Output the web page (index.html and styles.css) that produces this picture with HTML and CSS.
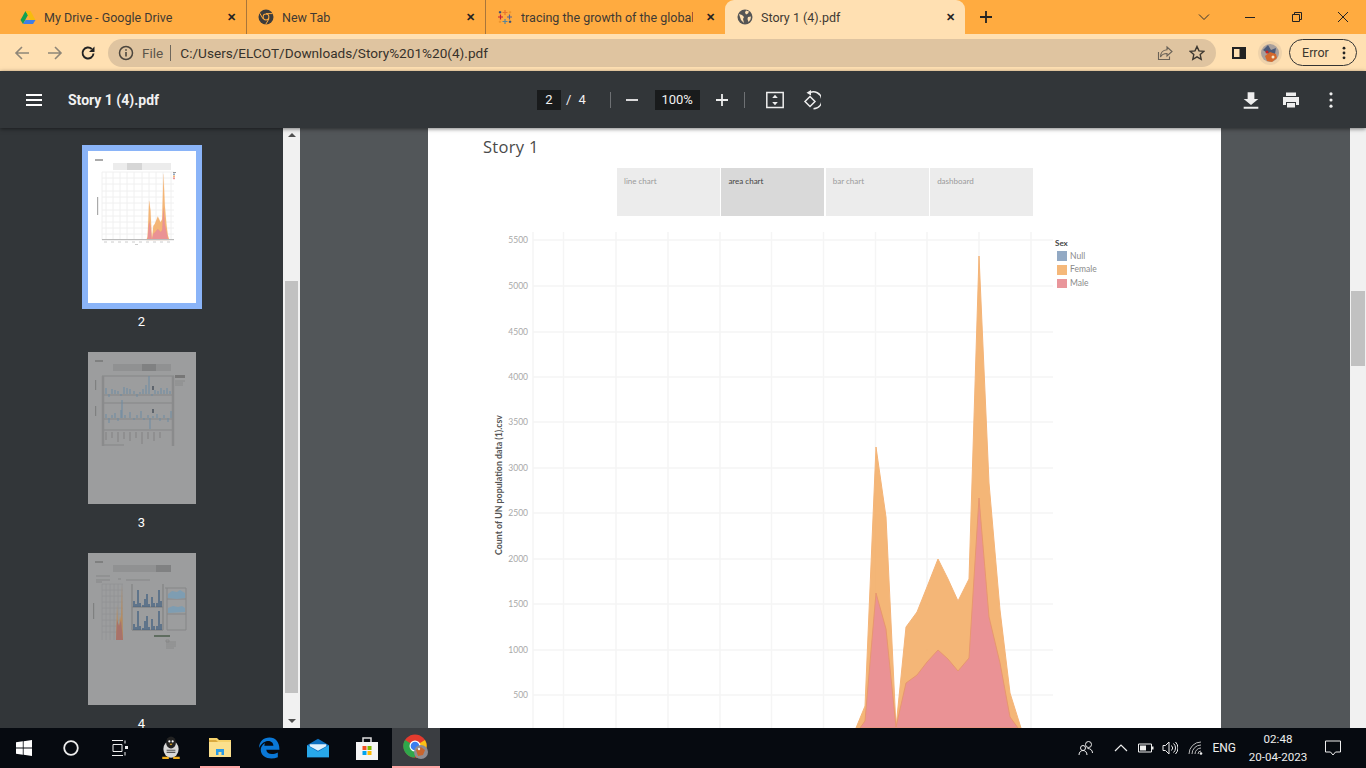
FILE: index.html
```html
<!DOCTYPE html>
<html lang="en">
<head>
    <meta charset="UTF-8">
    <title>Story 1 (4).pdf</title>
    <link rel="stylesheet" href="styles.css">
</head>
<body>
<div class="tabstrip">
    <div class="tab">
        <svg class="favicon" viewBox="0 0 16 16"><path d="M5.500 2 .5 11l2.500 4 5-9z" fill="#12a150"/><path d="M5.500 2h5l5 9h-5z" fill="#f7bb0e"/><path d="M3 15h10l2.500-4H5.500z" fill="#3f7ee8"/></svg>
        <span class="tab-title">My Drive - Google Drive</span>
        <span class="tab-close">✕</span>
    </div>
    <div class="tab">
        <svg class="favicon" viewBox="0 0 16 16"><circle cx="8" cy="8" r="7.500" fill="#3c3c3c"/><circle cx="8" cy="8" r="3.400" fill="#ffab40"/><circle cx="8" cy="8" r="2.400" fill="#3c3c3c"/><path d="M8 4.600h6.600M5 9.800 1.800 4.200M11 9.800l-3.300 5.600" stroke="#ffab40" stroke-width="1"/></svg>
        <span class="tab-title">New Tab</span>
        <span class="tab-close">✕</span>
    </div>
    <div class="tab">
        <svg class="favicon" viewBox="0 0 16 16"><path d="M8 1v5M5.500 3.500h5" stroke="#e8762d" stroke-width="1.200"/><path d="M8 10v5M5.500 12.500h5" stroke="#59879b" stroke-width="1.200"/><path d="M3.500 5.500v5M1 8h5" stroke="#c72037" stroke-width="1.200"/><path d="M12.500 5.500v5M10 8h5" stroke="#5b6591" stroke-width="1.200"/><path d="M3 2v2.500M1.800 3.200h2.500M13 11.500V14M11.800 12.800h2.500" stroke="#1f457e" stroke-width="1"/><path d="M13 2v2.500M11.800 3.200h2.500M3 11.500V14M1.800 12.800h2.500" stroke="#eb912b" stroke-width="1"/></svg>
        <span class="tab-title">tracing the growth of the global</span>
        <span class="tab-close">✕</span>
    </div>
    <div class="tab tab-active">
        <svg class="favicon" viewBox="0 0 16 16"><circle cx="8" cy="8" r="7.500" fill="#555"/><path d="M2 5l3 1 2 2-1 2 1 4-3-3-1-3zM9 1.500l3 1-1 2-2 1-1-2zM11 8l3-.5-.5 3-2 2.500-1-3z" fill="#ffe0b2"/></svg>
        <span class="tab-title">Story 1 (4).pdf</span>
        <span class="tab-close">✕</span>
    </div>
    <svg class="new-tab" viewBox="0 0 14 14"><path d="M7 1v12M1 7h12" stroke="#222" stroke-width="1.800"/></svg>
    <div class="window-btns">
        <svg class="win-icon win-chevron" viewBox="0 0 12 12"><path d="M1 3.500 6 8.500l5-5" fill="none" stroke="#333"/></svg>
        <svg class="win-icon win-min" viewBox="0 0 12 12"><path d="M1 6.500h10" stroke="#222"/></svg>
        <svg class="win-icon win-max" viewBox="0 0 12 12"><path d="M1.500 3.500h7v7h-7zM3.500 3.500v-2h7v7h-2" fill="none" stroke="#222"/></svg>
        <svg class="win-icon win-close" viewBox="0 0 12 12"><path d="M1 1l10 10M11 1 1 11" stroke="#222"/></svg>
    </div>
</div>

<div class="browser-bar">
    <svg class="nav-icon" viewBox="0 0 16 16"><path d="M15 8H2M8 2 2 8l6 6" fill="none" stroke="#8f8678" stroke-width="1.600"/></svg>
    <svg class="nav-icon" viewBox="0 0 16 16"><path d="M1 8h13M8 2l6 6-6 6" fill="none" stroke="#8f8678" stroke-width="1.600"/></svg>
    <svg class="nav-icon" viewBox="0 0 16 16"><path d="M13.500 8.500A5.500 5.500 0 1 1 11.800 4" fill="none" stroke="#222" stroke-width="1.900"/><path d="M14.500 1.500v5.500H9z" fill="#222"/></svg>
    <div class="omnibox">
        <svg class="info-icon" viewBox="0 0 16 16"><circle cx="8" cy="8" r="6.500" fill="none" stroke="#4c463e" stroke-width="1.500"/><path d="M8 7v4.500M8 4.200v1.500" stroke="#4c463e" stroke-width="1.600"/></svg>
        <span class="omni-file">File</span>
        <span class="omni-sep"></span>
        <span class="omni-url">C:/Users/ELCOT/Downloads/Story%201%20(4).pdf</span>
        <svg class="omni-share" viewBox="0 0 16 16"><path d="M10 2l5 4.500L10 11V8.500C6.500 8.500 4.500 10 3.500 12 3.500 8 6 5 10 4.800zM1.500 7v7.500h11V11.500" fill="none" stroke="#6a6257" stroke-width="1.100"/></svg>
        <svg class="omni-star" viewBox="0 0 16 16"><path d="M8 1.500l2 4.400 4.700.5-3.500 3.200 1 4.700L8 11.900l-4.200 2.400 1-4.700L1.300 6.400 6 5.900z" fill="none" stroke="#3c3730" stroke-width="1.400"/></svg>
    </div>
    <svg class="panel-icon" viewBox="0 0 14 14"><path d="M0 1h14v12H0z" fill="#222"/><path d="M2 3h5.500v8H2z" fill="#ffe0b2"/></svg>
    <svg class="avatar" viewBox="0 0 24 24"><circle cx="12" cy="12" r="12" fill="#efd2aa"/><circle cx="12" cy="12" r="9" fill="#a89f9c"/><path d="M5 9l5-5 3 5 5-2-1 6-5 1z" fill="#4c5a78"/><path d="M7 15l5-4 6 2 1 4-5 4-5-1z" fill="#d4682c"/><circle cx="9" cy="11" r="1.500" fill="#c22"/><circle cx="15" cy="16" r="1.500" fill="#f5e6c8"/></svg>
    <div class="error-pill">
        <span>Error</span>
        <svg class="pill-dots" viewBox="0 0 4 16"><circle cx="2" cy="2.500" r="1.600"/><circle cx="2" cy="8" r="1.600"/><circle cx="2" cy="13.500" r="1.600"/></svg>
    </div>
</div>

<div class="pdf-bar">
    <svg class="hamburger" viewBox="0 0 18 14"><path d="M1 2h16M1 7h16M1 12h16" stroke="#fff" stroke-width="2"/></svg>
    <span class="pdf-title">Story 1 (4).pdf</span>
    <div class="page-box">2</div>
    <span class="page-slash">/</span>
    <span class="page-total">4</span>
    <span class="pdf-sep sep-one"></span>
    <svg class="pdf-icon icon-minus" viewBox="0 0 14 14"><path d="M1 7h12" stroke="#eee" stroke-width="1.800"/></svg>
    <div class="zoom-box">100%</div>
    <svg class="pdf-icon icon-plus" viewBox="0 0 14 14"><path d="M1 7h12M7 1v12" stroke="#eee" stroke-width="1.800"/></svg>
    <span class="pdf-sep sep-two"></span>
    <svg class="pdf-tool icon-fit" viewBox="0 0 18 18"><path d="M.8 1.500h16.400v15H.8z" fill="none" stroke="#eee" stroke-width="1.500"/><path d="M9 3.800l2.800 3.200H6.200zM9 14.200l2.800-3.200H6.200z" fill="#eee"/></svg>
    <svg class="pdf-tool icon-rotate" viewBox="0 0 20 20"><path d="M9 6.500l-5 5 5 5 5-5z" fill="none" stroke="#eee" stroke-width="1.500"/><path d="M9 2.500a8.500 8.500 0 1 1 3.500 16.300" fill="none" stroke="#eee" stroke-width="1.500"/><path d="M10 0v5.500L5.500 2.700z" fill="#eee"/></svg>
    <span class="pdf-right">
        <svg class="pdf-tool" viewBox="0 0 16 16"><path d="M5 1h6v6h3.500L8 12.500 1.500 7H5zM1.500 14h13v1.800h-13z" fill="#eee"/></svg>
        <svg class="pdf-tool" viewBox="0 0 18 18"><path d="M4 1.500h10V5H4zM1 6h16v8h-3v-3H4v3H1zM5 12h8v4.500H5z" fill="#eee"/></svg>
        <svg class="pdf-tool" viewBox="0 0 16 16"><circle cx="8" cy="2.500" r="1.400" fill="#eee"/><circle cx="8" cy="8" r="1.400" fill="#eee"/><circle cx="8" cy="13.500" r="1.400" fill="#eee"/></svg>
    </span>
</div>

<div class="viewer">
    <div class="sidebar">
        <div class="thumbs">
            <div class="thumb thumb-on">
                <svg class="thumb-img" viewBox="0 0 108 152">
                    <rect width="108" height="152" fill="#fff"/>
                    <rect x="7" y="8" width="8" height="2" fill="#aaa"/>
                    <rect x="25" y="12" width="58" height="7" fill="#ececec"/>
                    <rect x="39" y="12" width="15" height="7" fill="#d6d6d6"/>
                    <path d="M14 21v68M18 21v68M25 21v68M32 21v68M39 21v68M46 21v68M54 21v68M61 21v68M68 21v68M75 21v68M83 21v68M14 21h72M14 27h72M14 33h72M14 40h72M14 46h72M14 52h72M14 59h72M14 65h72M14 71h72M14 77h72M14 83h72" stroke="#f0f0f0" stroke-width="1" fill="none"/>
                    <g transform="matrix(.1394 0 0 .1394 -61 -12.500)">
                        <use href="#female-shape"/>
                        <use href="#male-shape"/>
                    </g>
                    <rect x="14" y="88" width="72" height="1.200" fill="#bbb"/>
                    <path d="M16 91h3M23 91h3M30 91h3M37 91h3M44 91h3M51 91h3M58 91h3M65 91h3M72 91h3M79 91h3" stroke="#ccc" fill="none"/>
                    <rect x="47" y="93" width="3" height="1" fill="#ccc"/>
                    <rect x="9" y="46" width="1.200" height="18" fill="#aaa"/>
                    <rect x="85" y="21" width="3" height="1" fill="#999"/>
                    <rect x="85" y="22.500" width="2" height="1.700" fill="#92a9c4"/>
                    <rect x="85" y="24.500" width="2" height="1.700" fill="#f5b87a"/>
                    <rect x="85" y="26.500" width="2" height="1.700" fill="#e9969b"/>
                </svg>
            </div>
            <div class="thumb-label">2</div>
            <div class="thumb">
                <svg class="thumb-img" viewBox="0 0 108 152">
                    <rect width="108" height="152" fill="#9c9d9e"/>
                    <rect x="7" y="8" width="8" height="2" fill="#7f8080"/>
                    <rect x="25" y="12" width="58" height="7" fill="#909192"/>
                    <rect x="54" y="12" width="14" height="7" fill="#808182"/>
                    <path d="M14 24h72M14 43h72M14 51h72M14 67h72M14 78h72M14 93h22" stroke="#858687" stroke-width="1" fill="none"/>
                    <path d="M15 24v70M85 24v70" stroke="#8a8b8c" stroke-width="2.500" fill="none"/>
                    <path d="M18 42v-6M21 42v3M24 42v-5M27 42v-4M30 42v-3M33 42v2M36 42v-7M39 42v-6M42 42v-5M46 42v-3M49 42v3M52 42v-2M55 42v-5M58 42v-9M61 42v-18M64 42v2M67 42v-4M70 42v-3M73 42v-6M76 42v-4M79 42v-6M82 42v-3" stroke="#6d8ba3" stroke-width="1" fill="none"/>
                    <path d="M18 66v-4M21 66v5M24 66v-3M27 66v-5M30 66v3M33 66v-8M34 66v-18M37 66v-3M42 66v-6M46 66v2M49 66v-3M53 66v-7M56 66v2M60 66v-3M62 66v11M65 66v-2M69 66v-4M72 66v3M76 66v-3M80 66v4M83 66v-7" stroke="#6d8ba3" stroke-width="1" fill="none"/>
                    <path d="M65 34v4M65 57v4" stroke="#36404d" stroke-width="1.200" fill="none"/>
                    <path d="M18 80v8M24 80v6M30 80v10M36 80v7M42 80v9M48 80v6M54 80v12M60 80v7M66 80v9M72 80v6" stroke="#8a8b8c" stroke-width="1.500" fill="none"/>
                    <rect x="7" y="28" width="1.200" height="10" fill="#7f8080"/>
                    <rect x="7" y="54" width="1.200" height="10" fill="#7f8080"/>
                    <rect x="87" y="23" width="10" height="3" fill="#777"/>
                    <path d="M87 29h10M87 31h8M87 33h8" stroke="#858687" stroke-width=".8" fill="none"/>
                </svg>
            </div>
            <div class="thumb-label">3</div>
            <div class="thumb">
                <svg class="thumb-img" viewBox="0 0 108 152">
                    <rect width="108" height="152" fill="#9c9d9e"/>
                    <rect x="7" y="8" width="8" height="2" fill="#7f8080"/>
                    <rect x="25" y="12" width="58" height="7" fill="#909192"/>
                    <rect x="68" y="12" width="15" height="7" fill="#808182"/>
                    <path d="M8 23h14M8 27h14M8 29h6M38 27h24M30 26h3" stroke="#858687" stroke-width="1" fill="none"/>
                    <path d="M14 31v56M18 31v56M22 31v56M26 31v56M30 31v56M34 31v56M14 31h21M14 37h21M14 43h21M14 49h21M14 55h21M14 61h21M14 67h21M14 73h21M14 79h21" stroke="#929394" stroke-width=".8" fill="none"/>
                    <path d="M28 87l1-35 1 18 1 4 1-12 1 5 1-35 1 55z" fill="#b78c5f"/>
                    <path d="M28 87l1-20 2 6 2-6 2 20z" fill="#a8726a"/>
                    <rect x="5" y="50" width="1.200" height="16" fill="#7f8080"/>
                    <path d="M44 31v46M75 31v46M44 54h31M44 77h31" stroke="#848586" stroke-width="1.300" fill="none"/>
                    <path d="M46 54v-6M48 54v-3M50 54v-17M52 54v-4M55 54v-2M57 54v-8M59 54v-13M61 54v-3M64 54v-10M66 54v-4M69 54v-4M71 54v-17M73 54v-6M46 77v-6M48 77v-3M50 77v-19M52 77v-4M55 77v-2M57 77v-9M59 77v-14M61 77v-3M64 77v-11M66 77v-4M69 77v-4M71 77v-19M73 77v-6" stroke="#3f5f80" stroke-width="1.300" fill="none"/>
                    <path d="M77 35h21M79 35v42M98 35v42M79 46h19M79 61h19M79 77h19" stroke="#858687" stroke-width="1" fill="none"/>
                    <path d="M80 41l4-3 5 1 3-2 5 3v5l-8 1-9-1zM80 55l5-2 5 1 4-1 3 2v4l-17 1z" fill="#7e9db2"/>
                    <path d="M66 83h16" stroke="#5f6d60" stroke-width="2" fill="none"/>
                    <path d="M78 87h3v2h-3zM78 89h10M78 91h10M78 93h10M78 95h8" stroke="#858687" stroke-width=".8" fill="none"/>
                </svg>
            </div>
            <div class="thumb-label">4</div>
        </div>
        <div class="scroll-side">
            <span class="arrow-up"></span>
            <div class="side-track"><div class="side-handle"></div></div>
            <span class="arrow-down"></span>
        </div>
    </div>
    <div class="main">
        <div class="page">
            <div class="story-title">Story 1</div>
            <div class="story-nav">
                <div class="story-tab">line chart</div>
                <div class="story-tab story-tab-on">area chart</div>
                <div class="story-tab">bar chart</div>
                <div class="story-tab">dashboard</div>
            </div>
            <svg class="chart" viewBox="428 232 793 496">
                <g class="grid">
                    <path d="M533 240h520M533 286h520M533 332h520M533 377h520M533 422h520M533 468h520M533 513h520M533 559h520M533 604h520M533 650h520M533 695h520"/>
                    <path d="M533 232v496M563.500 232v496M616 232v496M668 232v496M720 232v496M771.500 232v496M823.500 232v496M875.500 232v496M927 232v496M979 232v496M1031 232v496"/>
                </g>
                <polygon id="female-shape" class="area-female" points="856,728 865,706 876,447 886,517 896,727 906,627 917,612 927,587 938,559 948,579 958,601 969,579 979,256 989,483 1000,610 1010,693 1021,728"/>
                <polygon id="male-shape" class="area-male" points="860,728 865,721 876,593 886,629 896,727 906,683 917,675 927,662 938,650 948,659 958,671 969,658 979,498 989,617 1000,663 1010,717 1018,728"/>
                <g class="axis-y">
                    <text x="528" y="243">5500</text>
                    <text x="528" y="289">5000</text>
                    <text x="528" y="335">4500</text>
                    <text x="528" y="380">4000</text>
                    <text x="528" y="425">3500</text>
                    <text x="528" y="471">3000</text>
                    <text x="528" y="516">2500</text>
                    <text x="528" y="562">2000</text>
                    <text x="528" y="607">1500</text>
                    <text x="528" y="653">1000</text>
                    <text x="528" y="698">500</text>
                </g>
                <text class="axis-title" transform="translate(502 485) rotate(-90)">Count of UN population data (1).csv</text>
                <text class="legend-title" x="1055" y="246">Sex</text>
                <rect x="1057" y="251" width="10" height="10" fill="#92a9c4"/>
                <rect x="1057" y="265" width="10" height="10" fill="#f5b87a"/>
                <rect x="1057" y="279" width="10" height="9" fill="#e9969b"/>
                <text class="legend-label" x="1070" y="259">Null</text>
                <text class="legend-label" x="1070" y="272">Female</text>
                <text class="legend-label" x="1070" y="286">Male</text>
            </svg>
        </div>
        <div class="scroll-main">
            <div class="main-handle"></div>
        </div>
    </div>
</div>

<div class="taskbar">
    <svg class="task-glyph win-logo" viewBox="0 0 16 16"><path d="M0 2.300 6.800 1.300V7.600H0zM7.600 1.200 16 0V7.600H7.600zM0 8.400H6.800V14.700L0 13.700zM7.600 8.400H16V16L7.600 14.800z" fill="#fff"/></svg>
    <svg class="task-glyph search-ring" viewBox="0 0 16 16"><circle cx="8" cy="8" r="6.800" fill="none" stroke="#eee" stroke-width="1.800"/></svg>
    <svg class="task-glyph task-view" viewBox="0 0 16 16"><path d="M0 .5h11M0 15.500h11M1 4.500h9v7H1zM13 .5v3M13 12v3.500" fill="none" stroke="#eee"/><rect x="13" y="6" width="3" height="3" fill="#eee"/></svg>
    <svg class="task-app app-penguin" viewBox="0 0 20 22"><ellipse cx="10" cy="12" rx="7" ry="8" fill="#d8d8d8"/><ellipse cx="10" cy="6" rx="4.500" ry="5.500" fill="#222"/><circle cx="8.500" cy="5" r="1" fill="#fff"/><circle cx="11.500" cy="5" r="1" fill="#fff"/><path d="M8.500 7h3L10 8.500z" fill="#f2b01e"/><path d="M2 19h6v2H2zM12 19h6v2h-6z" fill="#f2b01e"/><path d="M6 13h8M6 15h8" stroke="#555"/></svg>
    <div class="task-open">
        <svg class="task-app" viewBox="0 0 22 20"><path d="M0 1h8l2 2h12v17H0z" fill="#f6d26b"/><path d="M0 5h22v15H0z" fill="#fbe08d"/><path d="M0 5h9L7 3H0z" fill="#d9a93e"/><path d="M7 18v-6h8v6h-2.500v-3h-3v3z" fill="#2b9ce6"/></svg>
    </div>
    <svg class="task-app app-edge" viewBox="0 0 20 20"><path d="M1 10C1 4 5 .5 10.500.5 16 .5 19.500 4.500 19.500 11.500H7.500C7.800 15.500 13 16.500 18 14V18.300C11.500 21 2.500 19 2.500 11.500 2.500 9 4 7 6.500 5.500 6 6.500 5.800 7.500 5.800 8H14C14 4 10 3 7 4 4 5 2 7.500 1 10z" fill="#0a78d7"/></svg>
    <svg class="task-app app-mail" viewBox="0 0 24 20"><path d="M0 7 12 0l12 7v13H0z" fill="#0c6ebd"/><path d="M0 7l12 7 12-7v13H0z" fill="#28a8ea"/><path d="M3 6h18v2l-9 5-9-5z" fill="#dff1fc"/></svg>
    <svg class="task-app app-store" viewBox="0 0 22 24"><path d="M7 7V2h8v5" fill="none" stroke="#ddd" stroke-width="1.500"/><path d="M0 6h22v18H0z" fill="#f5f5f5"/><rect x="6.500" y="10" width="4" height="4" fill="#f25022"/><rect x="11.500" y="10" width="4" height="4" fill="#7fba00"/><rect x="6.500" y="15" width="4" height="4" fill="#00a4ef"/><rect x="11.500" y="15" width="4" height="4" fill="#ffb900"/></svg>
    <div class="task-chrome">
        <svg class="chrome-logo" viewBox="0 0 26 26"><circle cx="12" cy="12" r="11.500" fill="#e33b2e"/><path d="M12 12 22 6a11.500 11.500 0 0 1-9 17.500z" fill="#fbc116"/><path d="M12 12 12 23.500A11.500 11.500 0 0 1 2 6z" fill="#2fa64b"/><circle cx="12" cy="12" r="5.500" fill="#fff"/><circle cx="12" cy="12" r="4.300" fill="#3b7df0"/><circle cx="18" cy="18" r="7" fill="#8f8c92"/><path d="M13 16l5-3 4 3-2 5-5 1z" fill="#c9652e"/><circle cx="16" cy="15" r="1.200" fill="#eee"/></svg>
    </div>
    <div class="tray">
        <svg class="tray-icon" viewBox="0 0 16 16"><circle cx="10.500" cy="4.500" r="3" fill="none" stroke="#eee"/><circle cx="5" cy="8" r="2.500" fill="none" stroke="#eee"/><path d="M1 15c0-3 2-4.500 4-4.500s4 1.500 4 4.500M9.500 8.500c2.800 0 5 1.500 5 4.500" fill="none" stroke="#eee"/></svg>
        <svg class="tray-icon tray-chevron" viewBox="0 0 14 14"><path d="M1 10l6-6 6 6" fill="none" stroke="#eee" stroke-width="1.200"/></svg>
        <svg class="tray-icon tray-battery" viewBox="0 0 16 12"><path d="M.5 2h13v8H.5z" fill="none" stroke="#eee"/><rect x="2" y="3.500" width="6" height="5" fill="#eee"/><rect x="14" y="4.500" width="1.500" height="3" fill="#eee"/></svg>
        <svg class="tray-icon tray-sound" viewBox="0 0 16 14"><path d="M1 4.500h2.500L7 1v12L3.500 9.500H1z" fill="none" stroke="#eee"/><path d="M9.500 4.500a3.500 3.500 0 0 1 0 5M11.500 2.500a6 6 0 0 1 0 9M13.500 1a8.500 8.500 0 0 1 0 12" fill="none" stroke="#eee"/></svg>
        <svg class="tray-icon tray-wifi" viewBox="0 0 16 14"><path d="M1 13A12 12 0 0 1 13 1M4 13a9 9 0 0 1 9-9M7 13a6 6 0 0 1 6-6M10 13a3 3 0 0 1 3-3" fill="none" stroke="#bbb"/><circle cx="13" cy="12.500" r="1.300" fill="#eee"/></svg>
        <span class="tray-lang">ENG</span>
        <div class="tray-clock"><span>02:48</span><span>20-04-2023</span></div>
        <svg class="tray-icon tray-note" viewBox="0 0 16 16"><path d="M.5 1h15v11h-5L8 15l-2.500-3h-5z" fill="none" stroke="#eee"/></svg>
    </div>
</div>
</body>
</html>
```

FILE: styles.css
```css
* {
    box-sizing: border-box;
}
html, body {
    margin: 0;
    height: 100%;
    overflow: hidden;
}
body {
    display: flex;
    flex-direction: column;
    width: 1366px;
    height: 768px;
    font-family: Roboto, "Liberation Sans", sans-serif;
    background: #323639;
}
svg {
    display: block;
    flex: none;
}

/* browser tabs */
.tabstrip {
    display: flex;
    align-items: center;
    height: 34px;
    padding-left: 8px;
    background: #ffab40;
}
.tab {
    display: flex;
    align-items: center;
    width: 239px;
    height: 34px;
    padding: 0 8px 0 12px;
    border-right: 1px solid #a9763a;
    font-size: 12.500px;
    color: #3f3a33;
}
.tab:nth-child(2) {
    padding-left: 11px;
}
.tab:nth-child(3) {
    padding-left: 11px;
    border-right: none;
}
.tab-active {
    width: 240px;
    padding-left: 12px;
    border-right: none;
    border-radius: 9px 9px 0 0;
    background: #ffe0b2;
}
.favicon {
    width: 16px;
    height: 16px;
    margin-right: 8px;
}
.tab-title {
    flex: 1;
    overflow: hidden;
    white-space: nowrap;
}
.tab-close {
    width: 14px;
    margin-left: 10px;
    font-size: 11px;
    font-weight: bold;
    text-align: center;
    color: #222;
}
.new-tab {
    width: 14px;
    height: 14px;
    margin-left: 14px;
}
.window-btns {
    display: flex;
    align-items: center;
    margin-left: auto;
    padding-right: 17px;
}
.win-icon {
    width: 12px;
    height: 12px;
}
.win-min {
    margin-left: 34px;
}
.win-max {
    margin-left: 35px;
}
.win-close {
    margin-left: 34px;
}

/* address bar */
.browser-bar {
    display: flex;
    align-items: center;
    height: 37px;
    padding: 0 9px 0 14px;
    background: #ffe0b2;
}
.nav-icon {
    width: 16px;
    height: 16px;
    margin-right: 17px;
}
.omnibox {
    display: flex;
    align-items: center;
    width: 1109px;
    height: 28px;
    margin-left: -5px;
    padding: 0 10px;
    border-radius: 14px;
    background: #dfc4a0;
    font-size: 13.600px;
    color: #37322b;
}
.info-icon {
    width: 16px;
    height: 16px;
}
.omni-file {
    margin-left: 8px;
    color: #5c554a;
}
.omni-sep {
    width: 1px;
    height: 16px;
    margin: 0 9px 0 7px;
    background: #6e675c;
}
.omni-share {
    width: 16px;
    height: 16px;
    margin-left: auto;
}
.omni-star {
    width: 16px;
    height: 16px;
    margin-left: 16px;
    margin-right: 1px;
}
.panel-icon {
    width: 14px;
    height: 14px;
    margin-left: 16px;
}
.avatar {
    width: 24px;
    height: 24px;
    margin-left: 12px;
}
.error-pill {
    display: flex;
    align-items: center;
    justify-content: space-between;
    width: 68px;
    height: 27px;
    margin-left: 7px;
    padding: 0 10px 0 12px;
    border: 1px solid #333;
    border-radius: 14px;
    font-size: 12.500px;
    color: #3c372f;
}
.pill-dots {
    width: 4px;
    height: 14px;
    fill: #222;
}

/* pdf viewer toolbar */
.pdf-bar {
    position: relative;
    z-index: 2;
    display: flex;
    align-items: center;
    height: 57px;
    padding: 0 26px 0 25px;
    background: #323639;
    color: #f1f1f1;
    box-shadow: 0 1px 4px rgba(0, 0, 0, .5);
}
.hamburger {
    width: 18px;
    height: 14px;
}
.pdf-title {
    width: 469px;
    margin-left: 25px;
    font-size: 14px;
    font-weight: 700;
}
.page-box, .zoom-box {
    height: 20px;
    background: #191b1c;
    font-size: 13px;
    line-height: 20px;
    text-align: center;
}
.page-box {
    width: 24px;
}
.page-slash {
    margin-left: 5px;
    font-size: 13px;
}
.page-total {
    margin-left: 7px;
    font-size: 13px;
}
.pdf-sep {
    width: 1px;
    height: 16px;
    background: #6e7174;
}
.sep-one {
    margin-left: 24px;
}
.pdf-icon {
    width: 14px;
    height: 14px;
}
.icon-minus {
    margin-left: 14px;
}
.zoom-box {
    width: 45px;
    margin-left: 16px;
}
.icon-plus {
    margin-left: 15px;
}
.sep-two {
    margin-left: 15px;
}
.pdf-tool {
    width: 18px;
    height: 18px;
}
.icon-fit {
    margin-left: 21px;
}
.icon-rotate {
    width: 20px;
    height: 20px;
    margin-left: 17px;
}
.pdf-right {
    display: flex;
    align-items: center;
    gap: 22px;
    margin-left: auto;
}

/* viewer body */
.viewer {
    display: flex;
    height: 600px;
    overflow: hidden;
}
.sidebar {
    display: flex;
    justify-content: space-between;
    width: 300px;
    overflow: hidden;
    background: #323639;
}
.thumbs {
    display: flex;
    flex-direction: column;
    align-items: center;
    width: 283px;
    padding-top: 17px;
}
.thumb {
    flex: none;
    width: 120px;
    padding: 6px;
}
.thumb-on {
    background: #8ab4f8;
}
.thumb-img {
    width: 108px;
    height: 152px;
}
.thumb-label {
    flex: none;
    height: 37px;
    padding-top: 5px;
    font-size: 13px;
    line-height: 15px;
    color: #fff;
}
.scroll-side {
    display: flex;
    flex-direction: column;
    align-items: center;
    width: 17px;
    background: #f1f1f1;
}
.arrow-up, .arrow-down {
    flex: none;
    width: 0;
    height: 0;
    margin: 5px 0;
    border-left: 4px solid transparent;
    border-right: 4px solid transparent;
}
.arrow-up {
    border-bottom: 4px solid #505050;
}
.arrow-down {
    border-top: 4px solid #505050;
}
.side-track {
    flex: 1;
    width: 100%;
    padding-top: 139px;
    padding-bottom: 21px;
}
.side-handle {
    width: 13px;
    height: 100%;
    margin: 0 auto;
    background: #c1c1c1;
}
.main {
    display: flex;
    flex: 1;
    justify-content: space-between;
    background: #525659;
}
.page {
    width: 793px;
    height: 600px;
    margin-left: 128px;
    background: #fff;
}
.story-title {
    height: 40px;
    padding: 9px 0 0 55px;
    font-family: "Open Sans", sans-serif;
    font-size: 16.500px;
    letter-spacing: .3px;
    line-height: 19px;
    color: #4a4a4a;
}
.story-nav {
    display: flex;
    gap: 1.500px;
    width: 416px;
    height: 48px;
    margin-left: 189px;
}
.story-tab {
    flex: 1;
    padding: 8px 7px 0;
    background: #ececec;
    font-family: Lato, sans-serif;
    font-size: 8px;
    line-height: 11px;
    color: #9a9a9a;
}
.story-tab-on {
    background: #d9d9d9;
    color: #444;
}
.chart {
    width: 793px;
    height: 496px;
    margin-top: 16px;
}
.grid path {
    fill: none;
    stroke: #f5f5f5;
    stroke-width: 1.500;
}
.area-female {
    fill: #f3ae68;
    fill-opacity: .9;
    stroke: #f4b478;
}
.area-male {
    fill: #e98f97;
    fill-opacity: .94;
    stroke: #e8976f;
}
.axis-y text {
    font-family: Lato, sans-serif;
    font-size: 8.500px;
    text-anchor: end;
    fill: #a8a8a8;
}
.axis-title {
    font-family: Lato, sans-serif;
    font-size: 8.800px;
    font-weight: 700;
    text-anchor: middle;
    fill: #555;
}
.legend-title {
    font-family: Lato, sans-serif;
    font-size: 8px;
    font-weight: 700;
    fill: #444;
}
.legend-label {
    font-family: Lato, sans-serif;
    font-size: 8.500px;
    fill: #8a8a8a;
}
.scroll-main {
    width: 16px;
    padding: 163px 1px 0;
    background: #f1f1f1;
}
.main-handle {
    height: 75px;
    background: #c1c1c1;
}

/* windows taskbar */
.taskbar {
    display: flex;
    align-items: center;
    height: 40px;
    padding-left: 16px;
    background: #060a10;
}
.task-glyph {
    width: 16px;
    height: 16px;
}
.search-ring {
    margin-left: 31px;
}
.task-view {
    margin-left: 33px;
}
.task-app {
    width: 22px;
    height: 24px;
}
.app-penguin {
    margin-left: 32px;
}
.task-open {
    display: flex;
    align-items: center;
    justify-content: center;
    width: 40px;
    height: 40px;
    margin-left: 18px;
    border-bottom: 2px solid #ffa5a5;
}
.app-edge {
    margin-left: 18px;
}
.app-mail {
    margin-left: 27px;
}
.app-store {
    margin-left: 27px;
}
.task-chrome {
    display: flex;
    align-items: center;
    justify-content: center;
    width: 48px;
    height: 40px;
    margin-left: 14px;
    border-bottom: 2px solid #ffa5a5;
    background: #3a3d41;
}
.chrome-logo {
    width: 26px;
    height: 26px;
}
.tray {
    display: flex;
    align-items: center;
    margin-left: auto;
    padding-right: 25px;
    color: #eee;
}
.tray-icon {
    width: 16px;
    height: 16px;
}
.tray-chevron {
    width: 14px;
    height: 14px;
    margin-left: 20px;
}
.tray-battery {
    margin-left: 10px;
}
.tray-sound {
    margin-left: 8px;
}
.tray-wifi {
    margin-left: 10px;
}
.tray-lang {
    margin-left: 8px;
    font-size: 12px;
}
.tray-clock {
    display: flex;
    flex-direction: column;
    align-items: center;
    gap: 3px;
    width: 72px;
    margin-left: 6px;
    font-size: 11.600px;
    line-height: 15px;
}
.tray-note {
    width: 16px;
    height: 16px;
    margin-left: 11px;
}
```
